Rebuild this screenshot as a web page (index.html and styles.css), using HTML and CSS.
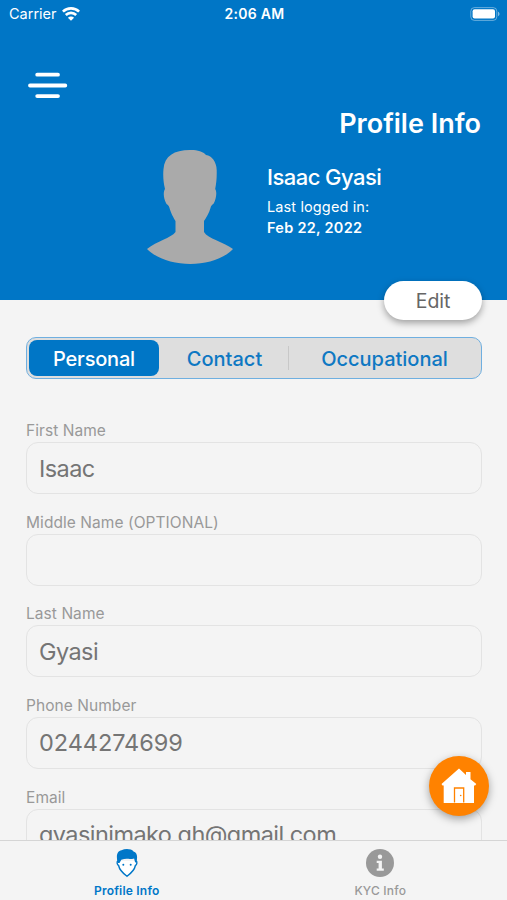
FILE: index.html
```html
<!DOCTYPE html>
<html lang="en">
<head>
    <meta charset="UTF-8">
    <meta name="viewport" content="width=device-width, initial-scale=1.0">
    <title>Profile Info</title>
    <link rel="stylesheet" href="styles.css">
</head>
<body>
    <div class="app">
        <header class="header">
            <div class="status-bar">
                <div class="carrier">
                    <span>Carrier</span>
                    <svg width="18" height="14" viewBox="0 0 18 14" fill="none" stroke="#fff" stroke-width="2.6">
                        <path d="M.9 4.700C5.300.2 12.700.2 17.100 4.700"/>
                        <path d="M3.800 8c2.900-2.900 7.500-2.900 10.400 0"/>
                        <path d="M9 13.800 5.900 10.700c1.700-1.600 4.500-1.600 6.200 0z" fill="#fff" stroke="none"/>
                    </svg>
                </div>
                <span class="time">2:06 AM</span>
                <svg class="battery" width="30" height="14" viewBox="0 0 30 14">
                    <rect x=".8" y=".6" width="26" height="12.8" rx="3.6" fill="none" stroke="#fff" stroke-opacity=".4"/>
                    <rect x="2.6" y="2.2" width="22.4" height="9.2" rx="2" fill="#fff"/>
                    <path d="M28 4.800c2 .7 2 3.700 0 4.400z" fill="#fff" fill-opacity=".5"/>
                </svg>
            </div>

            <button class="menu-btn" aria-label="Menu">
                <svg width="40" height="28" viewBox="0 0 40 28" stroke="#fff" stroke-width="3.8" stroke-linecap="round">
                    <path d="M9.200 3.700h20.800M2 14.500h35.300M9.200 25.100h20.800"/>
                </svg>
            </button>

            <h1>Profile Info</h1>

            <div class="user">
                <svg class="avatar" width="86" height="116" viewBox="0 0 86 116" fill="#aaa">
                    <path d="M43 1c7-.2 13 1.300 16 5 6 .8 10.500 7 10.700 15 .2 8-.4 13-1.500 19 2 3 1 9-1.200 14-1.500 2-2.500 1.500-3.500 5-1.300 5-4.500 10-6.500 13v11c4 7 19 9.500 29 17C67 120 20 120 0 100c10-8 24-11 28.500-17V72c-2-3-5-9-6-13-.8-3.500-2.500-3-3.500-5-2.500-5-3-11-1-14-1.500-6-2.200-13-1.500-20C17.500 7 27 1 43 1z"/>
                </svg>
                <div class="user-info">
                    <h2>Isaac Gyasi</h2>
                    <p>Last logged in:</p>
                    <p class="date">Feb 22, 2022</p>
                </div>
            </div>

            <button class="edit-btn">Edit</button>
        </header>

        <main class="content">
            <div class="tabs">
                <button class="tab active">Personal</button>
                <button class="tab contact">Contact</button>
                <button class="tab last">Occupational</button>
            </div>

            <form class="profile-form">
                <label for="first-name">First Name</label>
                <input type="text" id="first-name" value="Isaac">

                <label for="middle-name">Middle Name (OPTIONAL)</label>
                <input type="text" id="middle-name">

                <label for="last-name">Last Name</label>
                <input type="text" id="last-name" value="Gyasi">

                <label for="phone">Phone Number</label>
                <input class="phone" type="text" id="phone" value="0244274699">

                <label for="email">Email</label>
                <input type="text" id="email" value="gyasinimako.gh@gmail.com">
            </form>
        </main>

        <button class="home-btn" aria-label="Home">
            <svg width="36" height="36" viewBox="0 0 36 36">
                <path d="M18 .5 25 7V4h4.500v7.300L35.300 16l-1.200 1.500H33V35H2.700V17.500H1.500L.5 16z" fill="#fff"/>
                <path d="M13.500 34.500V20h9.200v14.500" fill="none" stroke="#ff8200" stroke-width="1.300"/>
                <circle cx="19.700" cy="27.500" r=".8" fill="#ff8200"/>
            </svg>
        </button>

        <nav class="bottom-nav">
            <a class="nav-item active" href="#">
                <svg width="22" height="30" viewBox="0 0 22 30">
                    <path d="M2 13c-1.500.4-1 3.700.6 4.500C3.500 22.300 7 25.300 11 28.300c4-3 7.500-6 8.400-10.800 1.600-.8 2.100-4.100.6-4.500" fill="#fff" stroke="#0077c8" stroke-width="1.400"/>
                    <path d="M1.700 15C-.3 6.500 1.500 3.200 5.500 2.200c4-1.800 10-1.400 12 1.300 3.800.8 4.300 5.300 2.800 11.500l-1.300-1-.9-3.600c-4 1.200-8.500-.4-12.800 1.300L3.500 15z" fill="#0077c8"/>
                    <circle cx="7.300" cy="16.800" r="1" fill="#0077c8"/>
                    <circle cx="14.700" cy="16.800" r="1" fill="#0077c8"/>
                </svg>
                <span>Profile Info</span>
            </a>
            <a class="nav-item" href="#">
                <svg width="30" height="30" viewBox="0 0 30 30">
                    <circle cx="15" cy="15" r="14" fill="#999"/>
                    <circle cx="15" cy="8.800" r="2.200" fill="#f4f4f4"/>
                    <path d="M11.700 12.800h5.200v7.700h1.900v2.200h-7.100v-2.200h1.900V15h-1.900z" fill="#f4f4f4"/>
                </svg>
                <span>KYC Info</span>
            </a>
        </nav>
    </div>
</body>
</html>
```

FILE: styles.css
```css
* {
    box-sizing: border-box;
}
body {
    font-family: Inter, sans-serif;
    background: #f4f4f4;
    margin: 0;
}
button {
    font-family: inherit;
    border: none;
    padding: 0;
    cursor: pointer;
}
svg {
    display: block;
}
.app {
    position: relative;
    width: 507px;
    height: 900px;
    overflow: hidden;
    display: flex;
    flex-direction: column;
}
.header {
    position: relative;
    flex: none;
    height: 300px;
    background: #0076c6;
    color: #fff;
}
.status-bar {
    display: grid;
    grid-template-columns: 1fr auto 1fr;
    align-items: center;
    height: 27px;
    padding: 0 7px 0 9px;
    font-size: 14.5px;
}
.carrier {
    display: flex;
    align-items: center;
    gap: 5px;
}
.time {
    font-weight: 600;
    font-size: 14px;
    letter-spacing: 0.3px;
}
.battery {
    justify-self: end;
}
.menu-btn {
    display: block;
    margin: 44px 0 0 28px;
    background: none;
}
h1 {
    margin: 8px 26px 0 0;
    text-align: right;
    font-size: 27px;
    line-height: 34px;
    font-weight: 600;
}
.user {
    display: flex;
    margin: 8px 0 0 147px;
}
.user-info {
    margin: 14px 0 0 34px;
}
h2 {
    margin: 0 0 5px;
    font-size: 22px;
    line-height: 28px;
    font-weight: 500;
    letter-spacing: -0.55px;
}
.user-info p {
    margin: 0;
    font-size: 14.5px;
    line-height: 21px;
    letter-spacing: 0.12px;
}
.user-info .date {
    font-weight: 600;
    letter-spacing: 0.27px;
}
.edit-btn {
    position: absolute;
    right: 25px;
    bottom: -20px;
    width: 98px;
    height: 39px;
    border-radius: 20px;
    background: #fff;
    color: #666;
    font-size: 19.5px;
    letter-spacing: -0.1px;
    box-shadow: 0 3px 7px rgba(0, 0, 0, 0.35);
}
.content {
    flex: 1;
    min-height: 0;
    overflow: hidden;
    padding: 37px 25px 0 26px;
}
.tabs {
    display: flex;
    height: 42px;
    padding: 2px;
    border: 1px solid #6fafe0;
    border-radius: 10px;
    background: #dedede;
}
.tab {
    padding-top: 1px;
    background: none;
    color: #0e78c3;
    font-size: 20px;
    font-weight: 500;
    border-radius: 8px;
}
.tab.active {
    width: 130px;
    background: #0076c6;
    color: #fff;
    letter-spacing: -0.2px;
}
.contact {
    width: 131px;
}
.tab.last {
    flex: 1;
    position: relative;
}
.tab.last::before {
    content: "";
    position: absolute;
    left: -2px;
    top: 6px;
    width: 1px;
    height: 24px;
    background: #c8c8c8;
}
.profile-form {
    display: flex;
    flex-direction: column;
    margin-top: 41px;
}
label {
    height: 22px;
    line-height: 22px;
    font-size: 15.5px;
    letter-spacing: 0.06px;
    color: #999;
}
input {
    height: 52px;
    margin-bottom: 17.7px;
    padding: 0 12px;
    border: 1px solid #e3e3e3;
    border-radius: 12px;
    background: transparent;
    font-family: inherit;
    font-size: 23.5px;
    letter-spacing: -0.57px;
    color: #757575;
}
.phone {
    padding-bottom: 1px;
    letter-spacing: -0.05px;
}
.home-btn {
    position: absolute;
    right: 18px;
    bottom: 84px;
    width: 60px;
    height: 60px;
    border-radius: 50%;
    background: #ff8200;
    display: flex;
    align-items: center;
    justify-content: center;
    box-shadow: 0 3px 9px rgba(0, 0, 0, 0.35);
}
.bottom-nav {
    flex: none;
    display: flex;
    height: 60px;
    border-top: 1px solid #d5d5d5;
    background: #f4f4f4;
}
.nav-item {
    flex: 1;
    display: flex;
    flex-direction: column;
    align-items: center;
    padding-top: 7px;
    color: #999;
    font-size: 12px;
    font-weight: 500;
    letter-spacing: 0.2px;
    text-decoration: none;
}
.nav-item span {
    margin-top: 5px;
}
.nav-item.active {
    color: #0077c8;
    font-weight: 600;
}
```
